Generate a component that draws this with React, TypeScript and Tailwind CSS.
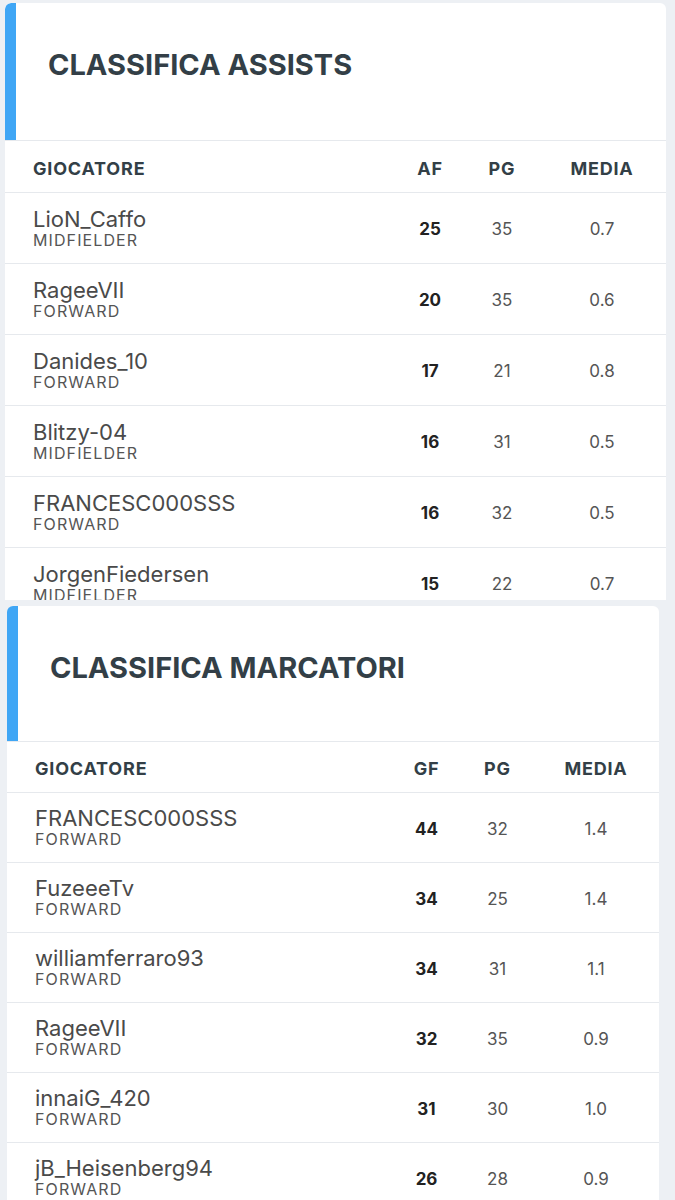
import React from "react";

type Row = { name: string; role: string; a: string; pg: string; m: string };

const assists: Row[] = [
  { name: "LioN_Caffo", role: "MIDFIELDER", a: "25", pg: "35", m: "0.7" },
  { name: "RageeVII", role: "FORWARD", a: "20", pg: "35", m: "0.6" },
  { name: "Danides_10", role: "FORWARD", a: "17", pg: "21", m: "0.8" },
  { name: "Blitzy-04", role: "MIDFIELDER", a: "16", pg: "31", m: "0.5" },
  { name: "FRANCESC000SSS", role: "FORWARD", a: "16", pg: "32", m: "0.5" },
  { name: "JorgenFiedersen", role: "MIDFIELDER", a: "15", pg: "22", m: "0.7" },
];

const marcatori: Row[] = [
  { name: "FRANCESC000SSS", role: "FORWARD", a: "44", pg: "32", m: "1.4" },
  { name: "FuzeeeTv", role: "FORWARD", a: "34", pg: "25", m: "1.4" },
  { name: "williamferraro93", role: "FORWARD", a: "34", pg: "31", m: "1.1" },
  { name: "RageeVII", role: "FORWARD", a: "32", pg: "35", m: "0.9" },
  { name: "innaiG_420", role: "FORWARD", a: "31", pg: "30", m: "1.0" },
  { name: "jB_Heisenberg94", role: "FORWARD", a: "26", pg: "28", m: "0.9" },
];

function Card({
  title,
  col,
  rows,
  variant,
}: {
  title: string;
  col: string;
  rows: Row[];
  variant: 1 | 2;
}) {
  const grid =
    variant === 1
      ? "grid grid-cols-[1fr_72px_72px_128px] items-center"
      : "grid grid-cols-[1fr_71px_71px_126px] items-center";
  const rowH = variant === 1 ? "h-[71px]" : "h-[70px]";
  return (
    <div
      className={
        variant === 1
          ? "ml-[5px] w-[661px] h-[597px] overflow-hidden rounded-t-[6px] bg-white"
          : "ml-[7px] w-[652px] rounded-t-[6px] bg-white"
      }
    >
      <div
        className={
          variant === 1
            ? "flex h-[138px] border-b border-[#e6e9ed]"
            : "flex h-[136px] border-b border-[#e6e9ed]"
        }
      >
        <div className="w-[11px] shrink-0 rounded-tl-[6px] bg-[#3fa6f5]" />
        <div className="pl-[32px] pt-[44px] text-[29px] leading-[36px] font-bold text-[#333f47]">
          {title}
        </div>
      </div>
      <div
        className={`${grid} ${
          variant === 1 ? "h-[52px]" : "h-[51px]"
        } border-b border-[#e6e9ed] pt-[3px] text-[18px] font-bold tracking-[0.8px] text-[#333f47]`}
      >
        <div className="pl-[28px]">GIOCATORE</div>
        <div className="text-center">{col}</div>
        <div className="text-center">PG</div>
        <div className="text-center">MEDIA</div>
      </div>
      {rows.map((r, i) => (
        <div
          key={i}
          className={`${grid} ${rowH} border-b border-[#e6e9ed]`}
        >
          <div className="pl-[28px] flex flex-col">
            <span className="text-[22px] leading-[24px] text-[#4a4a4a]">
              {r.name}
            </span>
            <span className="text-[16px] leading-[19px] tracking-[1.1px] text-[#555]">
              {r.role}
            </span>
          </div>
          <div className="pt-[4px] text-center text-[17px] font-bold text-[#222]">
            {r.a}
          </div>
          <div className="pt-[4px] text-center text-[17px] text-[#555]">
            {r.pg}
          </div>
          <div className="pt-[4px] text-center text-[17px] text-[#555]">
            {r.m}
          </div>
        </div>
      ))}
    </div>
  );
}

export default function App() {
  return (
    <div
      className="h-[1200px] overflow-hidden bg-[#edf0f4] pt-[3px]"
      style={{ fontFamily: "Inter, 'Noto Sans', sans-serif" }}
    >
      <Card title="CLASSIFICA ASSISTS" col="AF" rows={assists} variant={1} />
      <div className="h-[6px]" />
      <Card title="CLASSIFICA MARCATORI" col="GF" rows={marcatori} variant={2} />
    </div>
  );
}
